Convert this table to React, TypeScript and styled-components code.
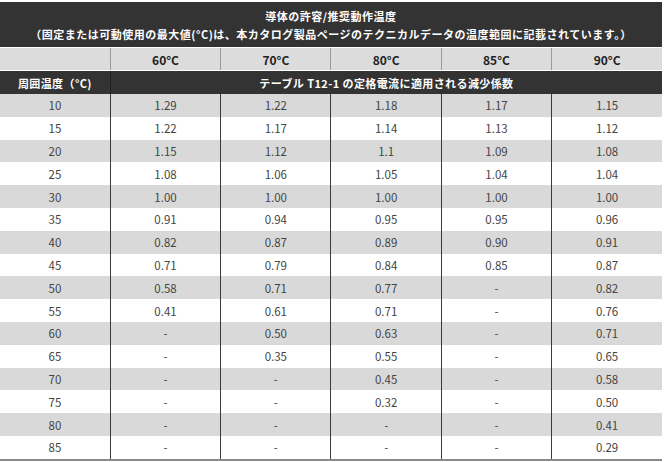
import React from 'react';
import styled, { createGlobalStyle } from 'styled-components';

const GlobalStyle = createGlobalStyle`
  html, body {
    margin: 0;
    padding: 0;
    background: #ffffff;
  }
  body {
    font-family: "Noto Sans CJK JP", "Noto Sans", sans-serif;
  }
`;

const Page = styled.div`
  padding-top: 2px;
  width: 662px;
`;

const Table = styled.table`
  width: 662px;
  border-collapse: collapse;
  table-layout: fixed;
  border-bottom: 2px solid #8a8a8a;
`;

const TitleCell = styled.th`
  background: #333333;
  color: #ffffff;
  font-size: 11px;
  font-weight: 700;
  line-height: 18px;
  height: 45px;
  padding: 0;
  text-align: center;
  letter-spacing: 0.5px;
  border-bottom: 1px solid #ffffff;
`;

const HeadCell = styled.th`
  background: #dcdcdc;
  color: #222222;
  font-size: 12px;
  font-weight: 700;
  height: 22px;
  padding: 0;
  text-align: center;
  border-left: 1px solid #9a9a9a;
  border-bottom: 1px solid #ffffff;
  &:first-child {
    border-left: none;
  }
`;

const DarkCell = styled.th<{ $left?: boolean }>`
  background: #333333;
  color: #ffffff;
  font-size: 11px;
  font-weight: 700;
  height: 23px;
  padding: 0;
  text-align: center;
  letter-spacing: 0.4px;
  border-left: ${(p) => (p.$left ? 'none' : '1px solid #222222')};
`;

const Row = styled.tr<{ $shade: boolean }>`
  background: ${(p) => (p.$shade ? '#d9d9d9' : '#ffffff')};
`;

const Cell = styled.td`
  color: #444444;
  font-size: 11.5px;
  height: 22.8px;
  padding: 0;
  text-align: center;
  border-left: 1px solid #3a3a3a;
  &:first-child {
    border-left: none;
  }
`;

const temps = ['60°C', '70°C', '80°C', '85°C', '90°C'];

const rows: [string, string[]][] = [
  ['10', ['1.29', '1.22', '1.18', '1.17', '1.15']],
  ['15', ['1.22', '1.17', '1.14', '1.13', '1.12']],
  ['20', ['1.15', '1.12', '1.1', '1.09', '1.08']],
  ['25', ['1.08', '1.06', '1.05', '1.04', '1.04']],
  ['30', ['1.00', '1.00', '1.00', '1.00', '1.00']],
  ['35', ['0.91', '0.94', '0.95', '0.95', '0.96']],
  ['40', ['0.82', '0.87', '0.89', '0.90', '0.91']],
  ['45', ['0.71', '0.79', '0.84', '0.85', '0.87']],
  ['50', ['0.58', '0.71', '0.77', '-', '0.82']],
  ['55', ['0.41', '0.61', '0.71', '-', '0.76']],
  ['60', ['-', '0.50', '0.63', '-', '0.71']],
  ['65', ['-', '0.35', '0.55', '-', '0.65']],
  ['70', ['-', '-', '0.45', '-', '0.58']],
  ['75', ['-', '-', '0.32', '-', '0.50']],
  ['80', ['-', '-', '-', '-', '0.41']],
  ['85', ['-', '-', '-', '-', '0.29']],
];

const App: React.FC = () => {
  return (
    <>
      <GlobalStyle />
      <Page>
        <Table>
          <thead>
            <tr>
              <TitleCell colSpan={6}>
                導体の許容/推奨動作温度
                <br />
                （固定または可動使用の最大値(°C)は、本カタログ製品ページのテクニカルデータの温度範囲に記載されています。）
              </TitleCell>
            </tr>
            <tr>
              <HeadCell />
              {temps.map((t) => (
                <HeadCell key={t}>{t}</HeadCell>
              ))}
            </tr>
            <tr>
              <DarkCell $left>周囲温度（°C)</DarkCell>
              <DarkCell colSpan={5}>テーブル T12-1 の定格電流に適用される減少係数</DarkCell>
            </tr>
          </thead>
          <tbody>
            {rows.map(([temp, vals], i) => (
              <Row key={temp} $shade={i % 2 === 0}>
                <Cell>{temp}</Cell>
                {vals.map((v, j) => (
                  <Cell key={j}>{v}</Cell>
                ))}
              </Row>
            ))}
          </tbody>
        </Table>
      </Page>
    </>
  );
};

export default App;
